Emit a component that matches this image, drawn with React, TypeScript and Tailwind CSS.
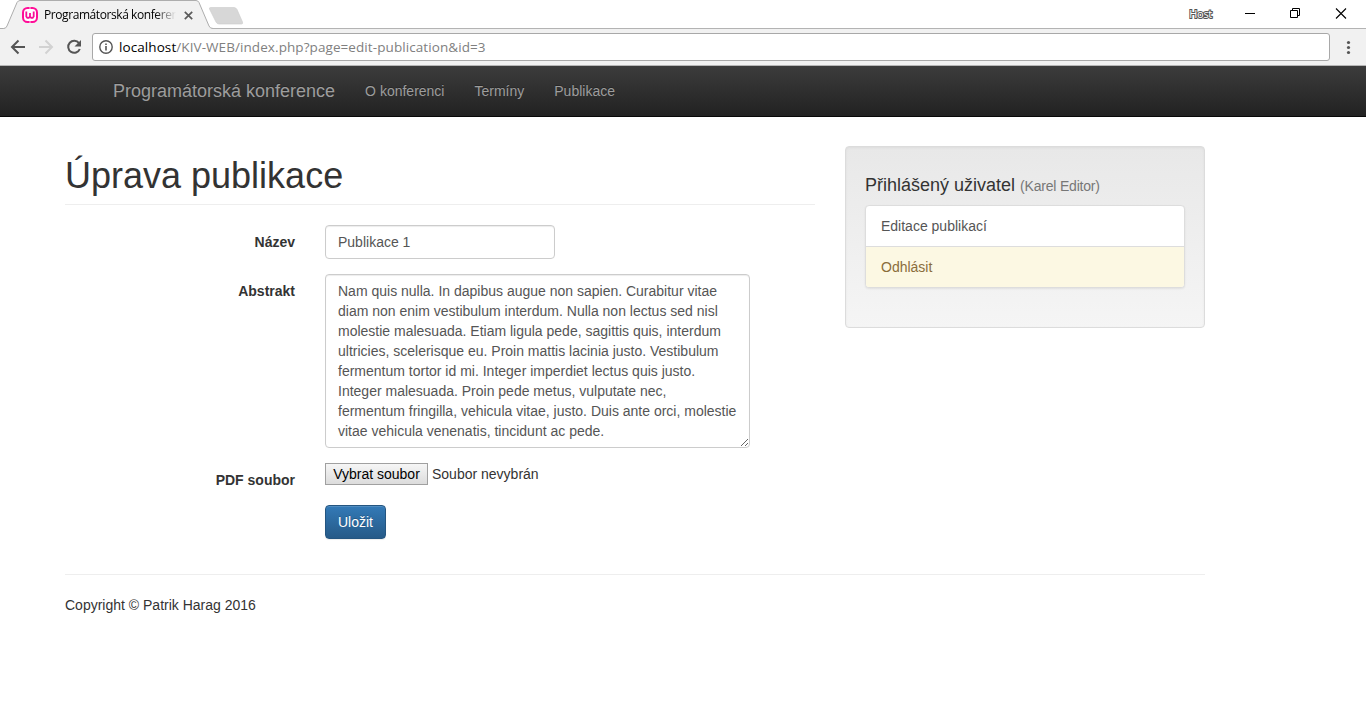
import React from "react";

const abstractText = `Nam quis nulla. In dapibus augue non sapien. Curabitur vitae
diam non enim vestibulum interdum. Nulla non lectus sed nisl
molestie malesuada. Etiam ligula pede, sagittis quis, interdum
ultricies, scelerisque eu. Proin mattis lacinia justo. Vestibulum
fermentum tortor id mi. Integer imperdiet lectus quis justo.
Integer malesuada. Proin pede metus, vulputate nec,
fermentum fringilla, vehicula vitae, justo. Duis ante orci, molestie
vitae vehicula venenatis, tincidunt ac pede.`;

function TabStrip() {
  return (
    <div className="relative flex h-[29px] justify-between bg-white font-['Open_Sans',sans-serif]">
      <svg className="absolute inset-0" width="1366" height="29" aria-hidden="true">
        <path d="M0 28.5H1366" stroke="#b3b3b3" />
        <path d="M0 29V28.5H3.5Q6 28.5 7 26L17 2.5Q18.2 .5 20 .5H196Q198 .5 199 2.5L209 26Q210 28.5 213 28.5V29Z" fill="#f1f1f1" />
        <path d="M0 28.5H3.5Q6 28.5 7 26L17 2.5Q18.2 .5 20 .5H196Q198 .5 199 2.5L209 26Q210 28.5 213 28.5" fill="none" stroke="#adadad" />
        <path d="M210.500 7.500H234Q236 7.500 237 9.500L242.500 22Q243.200 24 241.500 24H219Q217 24 216 22L209.500 9Q209 7.500 210.500 7.500Z" fill="#d7d7d7" stroke="#cbcbcb" strokeWidth=".6" />
      </svg>
      <div className="relative flex items-center pl-[22px] pt-px">
        <svg width="16" height="16" viewBox="0 0 16 16" className="shrink-0" aria-hidden="true">
          <rect x="1" y="1" width="14" height="14" rx="4.500" fill="#fff" stroke="#ff0d98" strokeWidth="2" />
          <path d="M4.300 4.500V9.500L5.300 10.800H6.800L8 9.500L9.200 10.800H10.700L11.700 9.500V4.500M8 6V9.500" fill="none" stroke="#f6109a" strokeWidth="1.800" />
          <path d="M7.300 0H8.700V2H7.300ZM7.300 14H8.700V16H7.300Z" fill="#ff8dcb" />
        </svg>
        <span className="ml-[6px] w-[132px] overflow-hidden whitespace-nowrap bg-linear-to-r from-black from-84% to-transparent bg-clip-text text-[12px] leading-4 tracking-[-0.42px] text-transparent">
          Programátorská konference
        </span>
        <svg width="9" height="9" viewBox="0 0 9 9" className="ml-[8px]" aria-hidden="true">
          <path d="M.8 .8L8.200 8.200M8.200 .8L.8 8.200" stroke="#5a5a5a" strokeWidth="1.700" />
        </svg>
      </div>
      <div className="relative flex h-[28px] items-center">
        <span className="mr-[32px] text-[11px] tracking-[-0.3px] text-white [-webkit-text-stroke:2px_#555] [paint-order:stroke_fill]">Host</span>
        <svg width="103" height="12" viewBox="0 1 103 12" className="mr-[19px]" aria-hidden="true">
          <path d="M1 6.500H11" stroke="#000" />
          <path d="M46.500 3.500H53.500V10.500H46.500ZM48.500 3V1.500H55.500V8.500H54" fill="none" stroke="#000" />
          <path d="M92 1.500L102 11.500M102 1.500L92 11.500" stroke="#000" strokeWidth="1.100" />
        </svg>
      </div>
    </div>
  );
}

function Toolbar() {
  return (
    <div className="flex h-[37px] items-center border-b border-[#b6b6b6] bg-[#f1f1f1] font-['Open_Sans',sans-serif]">
      <svg width="92" height="36" className="shrink-0" aria-hidden="true">
        <path d="M25 18H12.500M18.500 11.500L12 18L18.500 24.500" fill="none" stroke="#555" strokeWidth="2" />
        <path d="M39 18H51.500M45.500 11.500L52 18L45.500 24.500" fill="none" stroke="#d2d2d2" strokeWidth="2" />
        <path d="M79 14.200A6 6 0 1 0 79.800 20" fill="none" stroke="#555" strokeWidth="2" />
        <path d="M81 11V17.500H74.500Z" fill="#555" />
      </svg>
      <div className="flex h-[28px] w-[1238px] items-center rounded-[3px] border border-[#a8a8a8] bg-white pl-[6px]">
        <svg width="14" height="14" viewBox="0 0 14 14" aria-hidden="true">
          <circle cx="7" cy="7" r="6.200" fill="none" stroke="#555" strokeWidth="1.400" />
          <path d="M7 6V10.500M7 3.400V5" stroke="#555" strokeWidth="1.600" />
        </svg>
        <span className="ml-[6px] whitespace-nowrap text-[13.500px] leading-5 tracking-[0.08px] text-[#808080]">
          <span className="text-black">localhost</span>/KIV-WEB/index.php?page=edit-publication&amp;id=3
        </span>
      </div>
      <svg width="36" height="36" aria-hidden="true">
        <g fill="#555">
          <circle cx="18.500" cy="13.500" r="1.600" />
          <circle cx="18.500" cy="18.500" r="1.600" />
          <circle cx="18.500" cy="23.500" r="1.600" />
        </g>
      </svg>
    </div>
  );
}

function Navbar() {
  return (
    <nav className="flex h-[51px] items-center border-b border-[#080808] bg-linear-to-b from-[#3c3c3c] to-[#222] pl-[113px] text-[#9d9d9d] [text-shadow:0_-1px_0_rgba(0,0,0,0.25)]">
      <a className="text-[18px] leading-5">Programátorská konference</a>
      <a className="ml-[30px]">O konferenci</a>
      <a className="ml-[30px]">Termíny</a>
      <a className="ml-[30px]">Publikace</a>
    </nav>
  );
}

function Row({ label, children }: { label?: string; children: React.ReactNode }) {
  return (
    <div className="mb-[15px] flex">
      <label className="w-[230px] shrink-0 pt-[7px] text-right font-bold">{label}</label>
      <div className="ml-[30px]">{children}</div>
    </div>
  );
}

function PublicationForm() {
  return (
    <form className="pt-5">
      <Row label="Název">
        <input
          defaultValue="Publikace 1"
          className="block h-[34px] w-[230px] rounded-[4px] border border-[#ccc] bg-white px-3 py-1.5 text-[#555] shadow-[inset_0_1px_1px_rgba(0,0,0,0.075)]"
        />
      </Row>
      <Row label="Abstrakt">
        <textarea
          defaultValue={abstractText}
          spellCheck={false}
          className="block h-[174px] w-[425px] resize overflow-hidden whitespace-pre rounded-[4px] border border-[#ccc] bg-white px-3 py-1.5 text-[#555] shadow-[inset_0_1px_1px_rgba(0,0,0,0.075)]"
        />
      </Row>
      <Row label="PDF soubor">
        <div className="flex h-[22px] items-center">
          <button type="button" className="h-[22px] w-[103px] border border-[#a0a0a0] bg-linear-to-b from-[#f6f6f6] to-[#dcdcdc] text-black">
            Vybrat soubor
          </button>
          <span className="ml-[4px]">Soubor nevybrán</span>
        </div>
      </Row>
      <Row>
        <button
          type="button"
          className="block h-[34px] w-[61px] rounded-[4px] border border-[#245580] bg-linear-to-b from-[#337ab7] to-[#265a88] text-white shadow-[inset_0_1px_0_rgba(255,255,255,0.15),0_1px_1px_rgba(0,0,0,0.075)] [text-shadow:0_-1px_0_rgba(0,0,0,0.2)]"
        >
          Uložit
        </button>
      </Row>
    </form>
  );
}

function UserPanel() {
  return (
    <aside className="mt-[29px] h-[182px] w-[360px] rounded-[4px] border border-[#dcdcdc] bg-linear-to-b from-[#e8e8e8] to-[#f5f5f5] px-[19px] pt-[28px] shadow-[inset_0_1px_3px_rgba(0,0,0,0.05),0_1px_0_rgba(255,255,255,0.1)]">
      <h4 className="h-5 text-[18px] leading-5">
        Přihlášený uživatel <small className="text-[14px] leading-none tracking-[-0.2px] text-[#777]">(Karel Editor)</small>
      </h4>
      <div className="mt-[10px] overflow-hidden rounded-[4px] border border-[#ddd] bg-white shadow-[0_1px_2px_rgba(0,0,0,0.075)]">
        <a className="block h-[41px] border-b border-[#ddd] px-[15px] py-[10px] text-[#555]">Editace publikací</a>
        <a className="block h-10 bg-[#fcf8e3] px-[15px] py-[10px] text-[#8a6d3b]">Odhlásit</a>
      </div>
    </aside>
  );
}

export default function App() {
  return (
    <div className="h-[728px] w-[1366px] overflow-hidden bg-white font-['Liberation_Sans',Arial,sans-serif] text-[14px] leading-5 text-[#333]">
      <TabStrip />
      <Toolbar />
      <Navbar />
      <main className="ml-[65px] w-[1140px]">
        <div className="flex h-[457px] gap-[30px]">
          <section className="w-[750px]">
            <h1 className="h-[88px] border-b border-[#eee] pt-[39px] text-[36px] leading-10">Úprava publikace</h1>
            <PublicationForm />
          </section>
          <UserPanel />
        </div>
        <footer className="border-t border-[#eee] pt-5">Copyright © Patrik Harag 2016</footer>
      </main>
    </div>
  );
}
